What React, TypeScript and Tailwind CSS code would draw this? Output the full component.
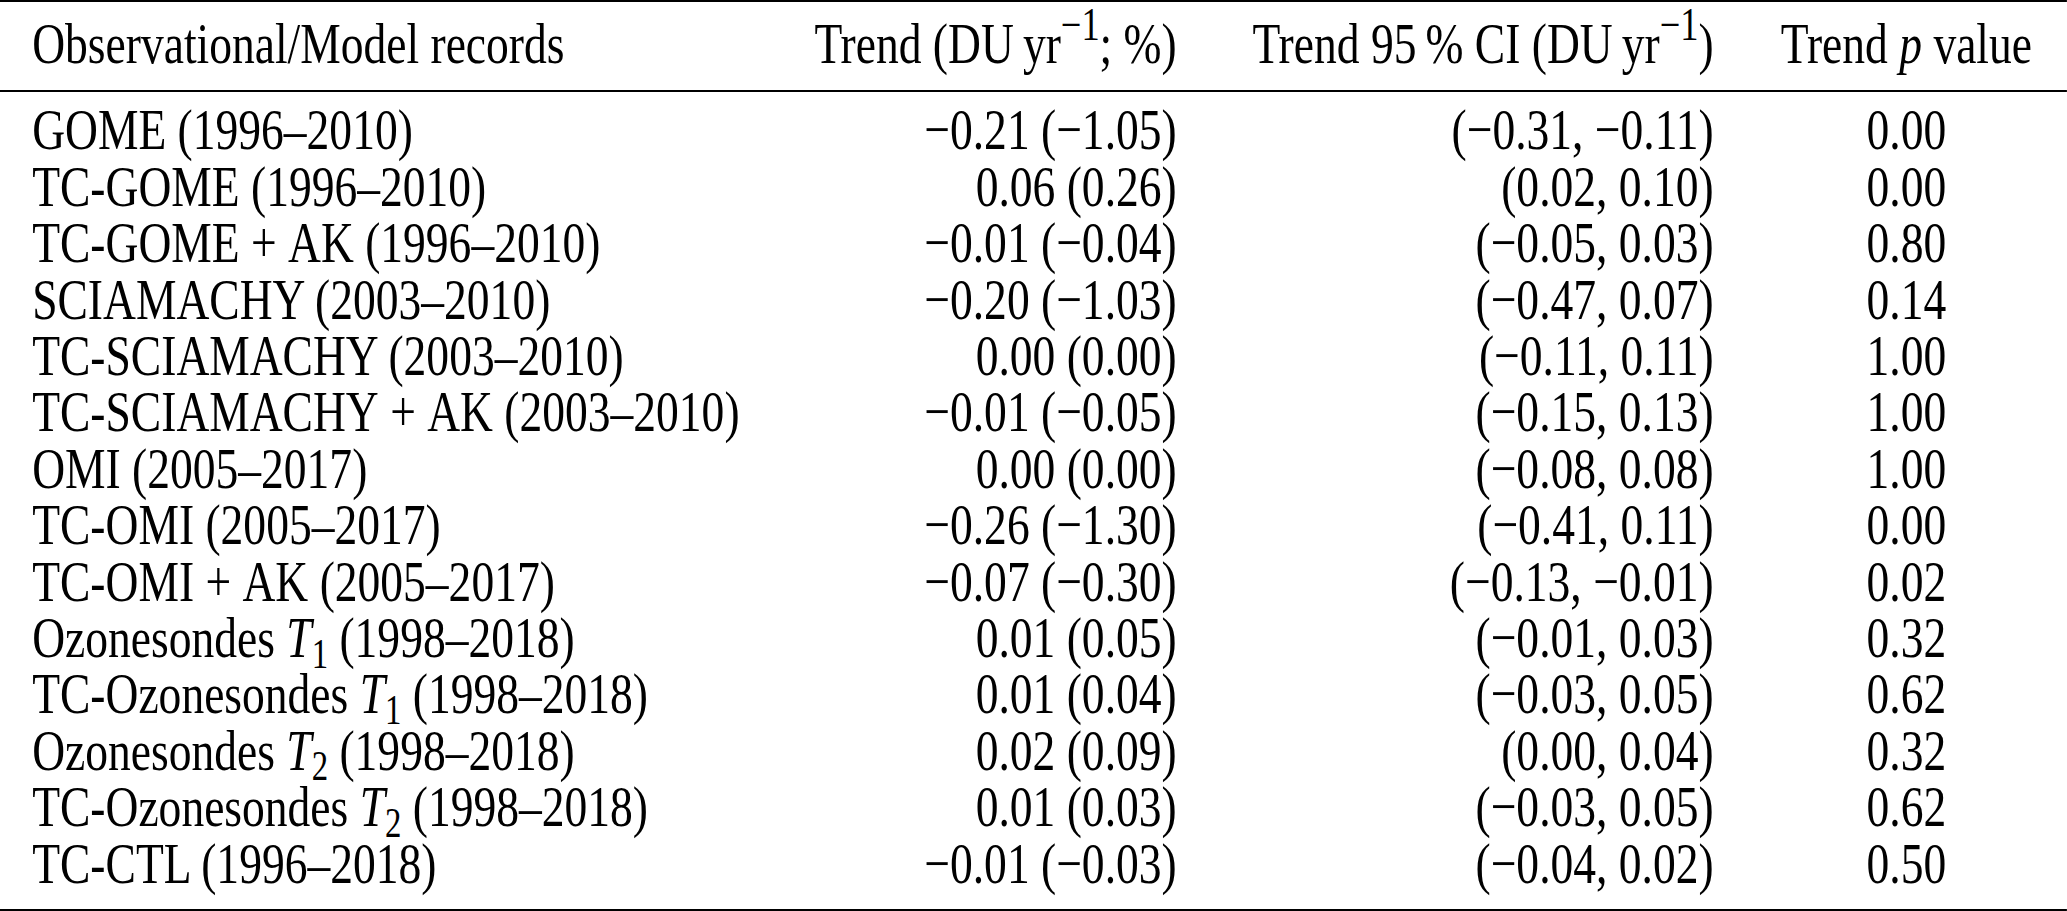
import type { ReactNode } from "react"

type Row = {
  name: ReactNode
  trend: string
  ci: string
  p: string
}

const T = ({ n }: { n: string }) => (
  <>
    <i>T</i>
    <sub className="text-[0.72em]">{n}</sub>
  </>
)

const rows: Row[] = [
  { name: "GOME (1996–2010)", trend: "−0.21 (−1.05)", ci: "(−0.31, −0.11)", p: "0.00" },
  { name: "TC-GOME (1996–2010)", trend: "0.06 (0.26)", ci: "(0.02, 0.10)", p: "0.00" },
  { name: "TC-GOME\u2005+\u2005AK (1996–2010)", trend: "−0.01 (−0.04)", ci: "(−0.05, 0.03)", p: "0.80" },
  { name: "SCIAMACHY (2003–2010)", trend: "−0.20 (−1.03)", ci: "(−0.47, 0.07)", p: "0.14" },
  { name: "TC-SCIAMACHY (2003–2010)", trend: "0.00 (0.00)", ci: "(−0.11, 0.11)", p: "1.00" },
  { name: "TC-SCIAMACHY\u2005+\u2005AK (2003–2010)", trend: "−0.01 (−0.05)", ci: "(−0.15, 0.13)", p: "1.00" },
  { name: "OMI (2005–2017)", trend: "0.00 (0.00)", ci: "(−0.08, 0.08)", p: "1.00" },
  { name: "TC-OMI (2005–2017)", trend: "−0.26 (−1.30)", ci: "(−0.41, 0.11)", p: "0.00" },
  { name: "TC-OMI\u2005+\u2005AK (2005–2017)", trend: "−0.07 (−0.30)", ci: "(−0.13, −0.01)", p: "0.02" },
  { name: <>Ozonesondes <T n="1" /> (1998–2018)</>, trend: "0.01 (0.05)", ci: "(−0.01, 0.03)", p: "0.32" },
  { name: <>TC-Ozonesondes <T n="1" /> (1998–2018)</>, trend: "0.01 (0.04)", ci: "(−0.03, 0.05)", p: "0.62" },
  { name: <>Ozonesondes <T n="2" /> (1998–2018)</>, trend: "0.02 (0.09)", ci: "(0.00, 0.04)", p: "0.32" },
  { name: <>TC-Ozonesondes <T n="2" /> (1998–2018)</>, trend: "0.01 (0.03)", ci: "(−0.03, 0.05)", p: "0.62" },
  { name: "TC-CTL (1996–2018)", trend: "−0.01 (−0.03)", ci: "(−0.04, 0.02)", p: "0.50" },
]

const cols = "grid grid-cols-[985px_555px_684px_409px]"
const cell = "px-[41px] whitespace-nowrap"

export default function App() {
  return (
    <div className="w-[2067px] h-[911px] overflow-hidden bg-white text-black font-['Liberation_Serif','Times_New_Roman',serif] text-[58px] leading-[56.4px]">
      {/* laid out wide, squeezed to match the condensed typesetting */}
      <div className="w-[2633px] origin-top-left scale-x-[0.785]">
        <div className="h-[2px] bg-black" />

        <div className={`${cols} pt-[14px] pb-[18px]`}>
          <div className={cell}>Observational/Model records</div>
          <div className={`${cell} text-right`}>
            Trend (DU&#8201;yr<sup className="text-[0.8em]">−1</sup>; %)
          </div>
          <div className={`${cell} text-right`}>
            Trend 95&#8201;% CI (DU&#8201;yr<sup className="text-[0.8em]">−1</sup>)
          </div>
          <div className={`${cell} text-center`}>
            Trend <i>p</i> value
          </div>
        </div>

        <div className="h-[2px] bg-black" />

        <div className="pt-[10px] pb-[17px]">
          {rows.map((r, i) => (
            <div key={i} className={cols}>
              <div className={cell}>{r.name}</div>
              <div className={`${cell} text-right`}>{r.trend}</div>
              <div className={`${cell} text-right`}>{r.ci}</div>
              <div className={`${cell} text-center`}>{r.p}</div>
            </div>
          ))}
        </div>

        <div className="h-[2px] bg-black" />
      </div>
    </div>
  )
}
